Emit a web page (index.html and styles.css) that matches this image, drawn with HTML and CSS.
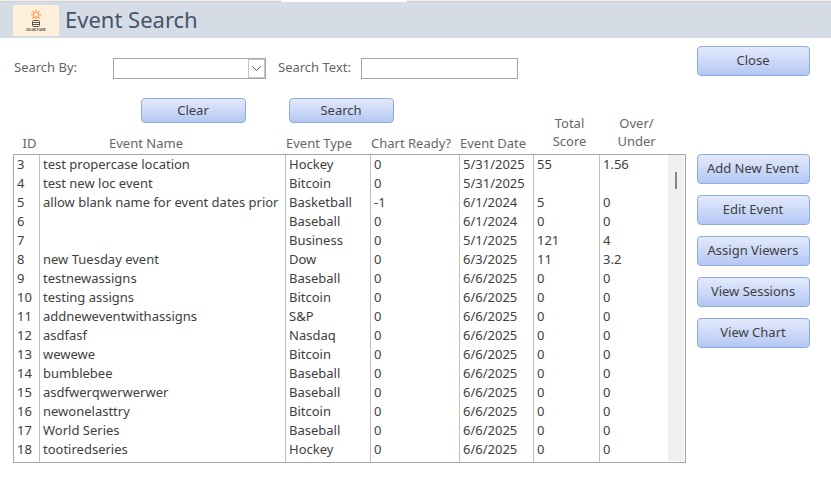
FILE: index.html
```html
<!DOCTYPE html>
<html lang="en">
<head>
<meta charset="utf-8">
<title>Event Search</title>
<link rel="stylesheet" href="styles.css">
</head>
<body>
<div class="tabstrip"><div class="tab"></div></div>
<header class="header">
  <svg class="logo" viewBox="0 0 46 31" role="img" aria-label="Solar Flare">
    <rect width="46" height="31" fill="#fff0dc"/>
    <g fill="none" stroke="#f9a15c" stroke-width="1.2">
      <circle cx="23" cy="9.7" r="2.6"/>
      <path d="M23 4.6v1.6M23 13.2v1.4M17.8 9.7h1.7M26.5 9.7h1.7M19.2 5.9l1.4 1.4M26.8 5.9l-1.4 1.4M19.2 13.5l1.4-1.4M26.8 13.5l-1.4-1.4"/>
    </g>
    <g fill="none" stroke="#5c544c" stroke-width="1">
      <rect x="19.5" y="15.5" width="7" height="6" rx="1"/>
      <path d="M19.5 17.5h7M19.5 19.5h7"/>
    </g>
    <text class="logo-text" x="23" y="26.4" text-anchor="middle">SOLAR FLARE</text>
  </svg>
  <h1 class="title">Event Search</h1>
</header>
<main class="page">
  <section class="content">
    <form class="search">
      <div class="fields">
        <label class="label-by" for="by">Search By:</label>
        <div class="combo">
          <select id="by" class="field"><option></option></select>
          <span class="combo-arrow"><svg viewBox="0 0 15 17"><path d="M3.5 6.500l4 4 4-4" fill="none" stroke="#555" stroke-width="1"/></svg></span>
        </div>
        <label class="label-text" for="text">Search Text:</label>
        <input id="text" class="field field-text" type="text">
      </div>
      <div class="actions">
        <button class="btn" type="button">Clear</button>
        <button class="btn" type="button">Search</button>
      </div>
    </form>
    <table class="events">
      <colgroup><col class="c-id"><col><col class="c-type"><col class="c-ready"><col class="c-date"><col class="c-total"><col class="c-over"><col class="c-scroll"></colgroup>
      <thead>
        <tr><th class="center">ID</th><th class="name">Event Name</th><th>Event Type</th><th>Chart Ready?</th><th>Event Date</th><th class="two">Total<br>Score</th><th class="two">Over/<br>Under</th><td></td></tr>
      </thead>
      <tbody>
        <tr><td>3</td><td>test propercase location</td><td>Hockey</td><td>0</td><td>5/31/2025</td><td>55</td><td>1.56</td><td class="scroll" rowspan="16"><div class="thumb"></div></td></tr>
        <tr><td>4</td><td>test new loc event</td><td>Bitcoin</td><td>0</td><td>5/31/2025</td><td></td><td></td></tr>
        <tr><td>5</td><td>allow blank name for event dates prior</td><td>Basketball</td><td>-1</td><td>6/1/2024</td><td>5</td><td>0</td></tr>
        <tr><td>6</td><td></td><td>Baseball</td><td>0</td><td>6/1/2024</td><td>0</td><td>0</td></tr>
        <tr><td>7</td><td></td><td>Business</td><td>0</td><td>5/1/2025</td><td>121</td><td>4</td></tr>
        <tr><td>8</td><td>new Tuesday event</td><td>Dow</td><td>0</td><td>6/3/2025</td><td>11</td><td>3.2</td></tr>
        <tr><td>9</td><td>testnewassigns</td><td>Baseball</td><td>0</td><td>6/6/2025</td><td>0</td><td>0</td></tr>
        <tr><td>10</td><td>testing assigns</td><td>Bitcoin</td><td>0</td><td>6/6/2025</td><td>0</td><td>0</td></tr>
        <tr><td>11</td><td>addneweventwithassigns</td><td>S&amp;P</td><td>0</td><td>6/6/2025</td><td>0</td><td>0</td></tr>
        <tr><td>12</td><td>asdfasf</td><td>Nasdaq</td><td>0</td><td>6/6/2025</td><td>0</td><td>0</td></tr>
        <tr><td>13</td><td>wewewe</td><td>Bitcoin</td><td>0</td><td>6/6/2025</td><td>0</td><td>0</td></tr>
        <tr><td>14</td><td>bumblebee</td><td>Baseball</td><td>0</td><td>6/6/2025</td><td>0</td><td>0</td></tr>
        <tr><td>15</td><td>asdfwerqwerwerwer</td><td>Baseball</td><td>0</td><td>6/6/2025</td><td>0</td><td>0</td></tr>
        <tr><td>16</td><td>newonelasttry</td><td>Bitcoin</td><td>0</td><td>6/6/2025</td><td>0</td><td>0</td></tr>
        <tr><td>17</td><td>World Series</td><td>Baseball</td><td>0</td><td>6/6/2025</td><td>0</td><td>0</td></tr>
        <tr><td>18</td><td>tootiredseries</td><td>Hockey</td><td>0</td><td>6/6/2025</td><td>0</td><td>0</td></tr>
      </tbody>
    </table>
  </section>
  <aside class="side">
    <button class="btn close" type="button">Close</button>
    <button class="btn" type="button">Add New Event</button>
    <button class="btn" type="button">Edit Event</button>
    <button class="btn" type="button">Assign Viewers</button>
    <button class="btn" type="button">View Sessions</button>
    <button class="btn" type="button">View Chart</button>
  </aside>
</main>
</body>
</html>
```
FILE: styles.css
```css
* { box-sizing: border-box; }

body {
  margin: 0;
  background: #fff;
  color: #404040;
  font: 13px/18px "Noto Sans", "Open Sans", sans-serif;
}

.tabstrip {
  height: 2px;
  background: #f0f0f0;
  border-bottom: 1px solid #d0d0d0;
}
.tab {
  width: 126px;
  height: 2px;
  margin-left: 281px;
  background: #fff;
}

.header {
  display: flex;
  align-items: center;
  gap: 6px;
  height: 36px;
  padding: 0 13px;
  background: #d6dce5;
}
.logo { width: 46px; height: 31px; }
.logo-text { font-size: 3px; font-weight: 700; fill: #5c544c; }
.title {
  margin: 0;
  padding-bottom: 2px;
  color: #44546a;
  font-size: 22px;
  line-height: 30px;
  font-weight: 400;
}

.page {
  display: grid;
  grid-template-columns: 1fr 113px;
  gap: 11px;
  padding: 0 21px 0 13px;
}

.search { padding-top: 20px; color: #666; }
.fields { display: flex; align-items: flex-start; }
.label-by { width: 100px; padding-left: 1px; }
.label-text { width: 95px; padding-left: 12px; white-space: nowrap; }
.combo { position: relative; width: 153px; }
.field {
  display: block;
  width: 100%;
  height: 21px;
  padding: 0 3px;
  border: 1px solid #a6a6a6;
  border-radius: 0;
  background: #fff;
  color: #404040;
  font: inherit;
  appearance: none;
}
.field-text { width: 157px; }
.combo-arrow {
  position: absolute;
  top: 1px;
  right: 1px;
  width: 17px;
  height: 19px;
  border: 1px solid #bdc5cd;
  pointer-events: none;
}
.combo-arrow svg { display: block; width: 100%; height: 100%; }

.actions {
  position: relative;
  z-index: 1;
  display: flex;
  gap: 43px;
  width: max-content;
  padding: 19px 0 0 128px;
}
.btn {
  padding: 0 1px 2px 0;
  border: 1px solid #8faadc;
  border-radius: 4px;
  background: linear-gradient(#e3eafb, #b4c7f4);
  color: #404040;
  font: inherit;
  white-space: nowrap;
}
.actions .btn { width: 105px; height: 25px; }

.events {
  width: 100%;
  margin-top: -9px;
  table-layout: fixed;
  border-collapse: separate;
  border-spacing: 0;
}
.c-id { width: 27px; }
.c-type { width: 85px; }
.c-ready { width: 89px; }
.c-date { width: 74px; }
.c-total { width: 66px; }
.c-over { width: 68px; }
.c-scroll { width: 18px; }

.events thead th,
.events thead td {
  padding: 0 0 2px 0;
  border-bottom: 1px solid #a6a6a6;
  color: #666;
  font-weight: 400;
  text-align: left;
  vertical-align: bottom;
  white-space: nowrap;
}
.events thead .center { padding-left: 6px; text-align: center; }
.events thead .name { padding-right: 34px; text-align: center; }
.events thead .two { padding: 0 0 4px 5px; text-align: center; }

.events tbody td {
  height: 19px;
  padding: 0 0 0 3px;
  border-right: 1px solid #bfbfbf;
  line-height: 19px;
  white-space: nowrap;
}
.events tbody td:first-child { border-left: 1px solid #a6a6a6; }
.events tbody td:nth-child(7) { border-right: 0; }
.events tbody tr:last-child td {
  height: 23px;
  padding-bottom: 3px;
  border-bottom: 1px solid #a6a6a6;
}
.events tbody .scroll {
  padding: 17px 0 0 7px;
  border-right: 1px solid #a6a6a6;
  border-bottom: 1px solid #a6a6a6;
  background: #f0f0f0;
  box-shadow: inset -1px -1px #fff;
  vertical-align: top;
}
.thumb { width: 2px; height: 17px; background: #858585; }

.side {
  display: flex;
  flex-direction: column;
  gap: 11px;
  padding-top: 8px;
}
.side .btn { height: 30px; }
.side .close { margin-bottom: 67px; }
```
